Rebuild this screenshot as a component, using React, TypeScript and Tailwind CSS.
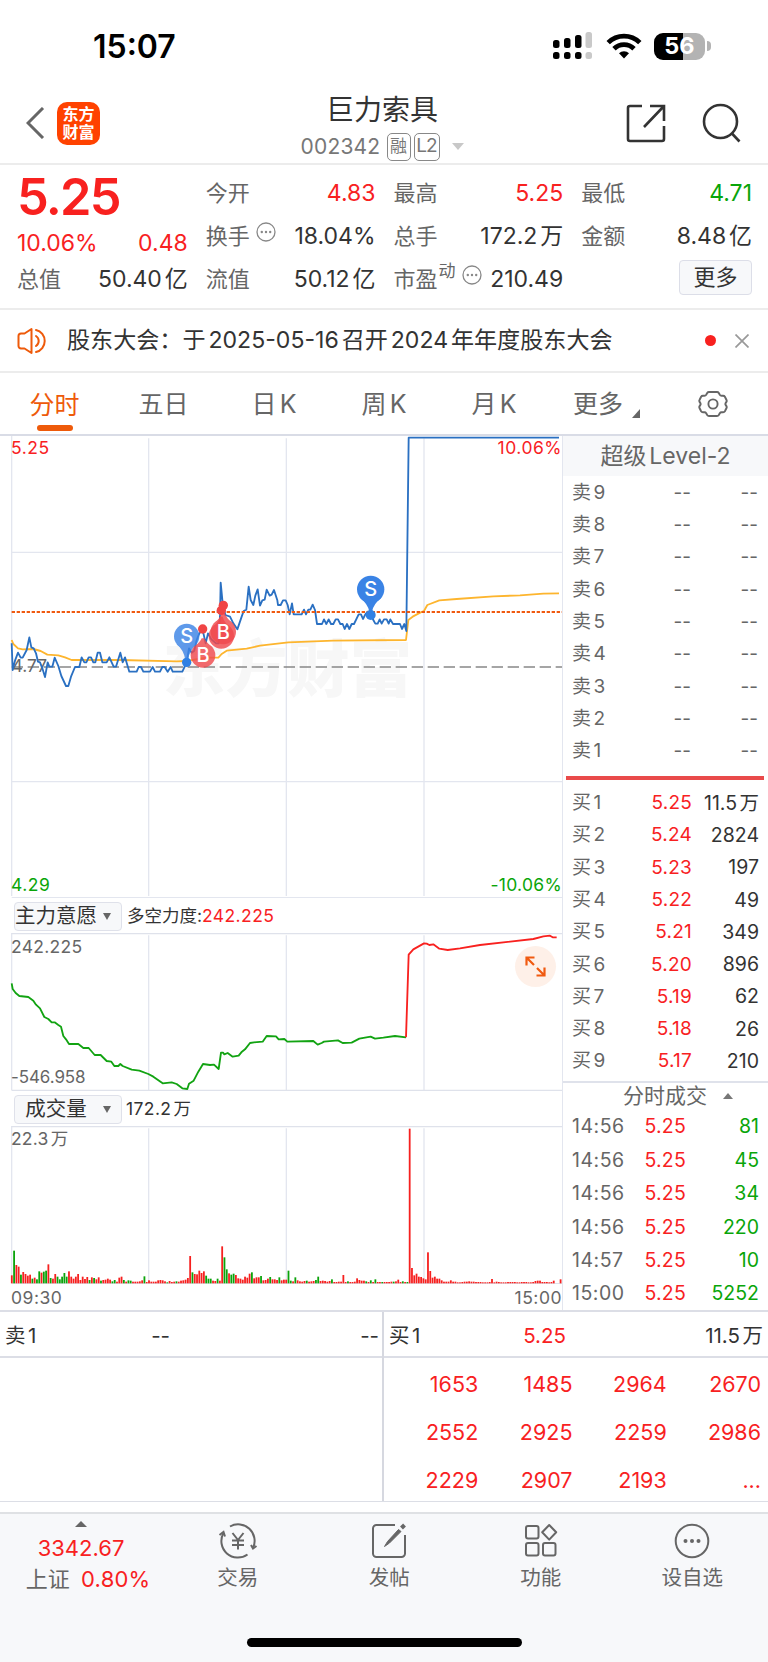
import { ReactNode } from "react";

const PRICE =
  "35,640 38,720 45,692 54,668 62,683 68,683 80,660 88,622 94,652 101,655 108,670 114,695 120,697 127,715 135,741 143,697 148,710 157,710 164,683 175,708 184,738 198,768 205,768 213,740 225,711 238,711 245,682 253,697 259,697 266,682 273,682 280,697 286,697 293,668 300,668 307,697 320,697 328,682 341,710 348,710 361,668 368,697 375,682 388,725 410,725 416,711 423,711 430,725 450,725 458,711 465,725 480,725 487,711 494,711 503,725 512,711 518,725 547,725 560,697 567,655 575,668 583,662 590,630 598,610 608,600 617,640 624,610 634,628 648,640 656,640 660,560 662,458 668,520 676,555 690,560 700,580 712,598 724,563 731,543 739,539 746,470 752,510 760,525 766,497 773,478 780,527 787,511 794,509 800,479 809,497 815,494 822,480 832,511 834,525 842,525 849,511 857,511 863,525 869,553 876,520 881,553 905,553 912,539 918,553 925,539 931,539 938,524 945,540 951,582 966,582 972,568 979,582 986,568 993,582 1000,582 1007,568 1014,568 1021,582 1028,582 1034,597 1041,582 1048,597 1055,582 1062,582 1076,553 1083,553 1089,567 1096,553 1103,545 1112,555 1120,570 1126,581 1133,581 1139,568 1145,581 1152,568 1160,568 1166,581 1171,568 1179,582 1200,582 1206,597 1213,582 1219,603 1226,23 1677,23";

const AVERAGE =
  "35,630 40,642 54,655 68,658 100,657 122,663 142,674 175,676 195,682 215,690 360,690 530,694 560,693 620,683 655,683 665,672 680,662 740,656 780,647 865,637 1000,632 1218,630 1225,570 1238,560 1262,547 1272,543 1282,525 1318,511 1370,507 1480,499 1560,496 1630,491 1677,490";

const FORCE_DOWN =
  "35,370 38,387 47,399 58,408 85,411 100,422 108,434 120,445 133,471 145,477 155,487 164,487 175,495 183,500 190,528 198,538 207,552 235,552 250,564 266,564 284,585 302,585 320,603 334,605 343,618 355,618 361,612 368,618 395,629 418,632 445,642 460,650 488,670 515,667 530,672 547,685 562,687 567,671 581,662 595,635 609,612 630,615 642,614 656,627 663,578 669,578 673,583 683,579 698,590 716,587 724,577 735,568 750,549 762,547 788,545 800,528 828,529 836,538 853,537 862,545 940,543 953,554 965,549 972,545 1014,541 1028,549 1055,548 1078,536 1112,530 1125,536 1150,533 1185,528 1218,532";

const FORCE_UP =
  "1218,532 1226,284 1240,268 1272,250 1280,251 1288,255 1300,253 1318,266 1343,270 1380,265 1440,255 1600,237 1630,229 1650,227 1658,232 1670,232";

// one entry per minute: direction + bar height
const VOLUME =
  "r24 g98 r55 r50 g26 r34 r28 r23 r26 g14 r17 g12 g36 r32 g35 g38 r57 g16 r14 r28 g20 g12 g20 g31 g20 r36 r20 r14 r20 r28 r10 r20 r13 r19 g10 r18 g16 r12 r18 g8 r10 r11 r14 r11 g6 g10 r5 r17 r20 g10 r5 g9 g8 r5 r5 r5 r6 r9 g21 r4 r9 r5 r5 r5 r9 r10 r9 r6 g3 r7 r4 r5 g6 r5 r8 r9 r11 r16 r82 g33 r28 r27 r38 r31 r36 g23 g14 g14 r8 r7 g14 r8 r111 g78 g42 r30 g26 g29 r25 r15 r14 r11 r20 r17 r29 g33 r15 r18 r18 g22 r9 r10 r14 g19 r12 r12 r10 g18 r9 r11 r11 g38 g8 r6 g18 r9 r6 r5 r7 g8 r5 r6 r7 g10 g20 r7 r8 r7 r5 r7 g12 r4 r4 r5 r5 r25 r4 g6 r4 r4 r5 r15 r10 r8 r8 g6 r4 g9 r4 g12 r4 r4 g4 r4 r4 r4 r5 g5 r6 r11 r4 g6 r4 g4 r464 r46 r24 r29 r20 r19 r15 r12 r93 r37 r17 r20 r14 r14 r9 r5 r5 r5 r9 r5 r5 r3 r3 r4 r5 r5 r6 r5 r5 r4 r4 r4 r3 r3 r3 r4 r13 r3 r5 r4 r3 r3 r3 r4 r4 r4 r4 r3 r3 r4 r4 r4 r3 r3 r4 r7 r8 r8 r4 r4 r4 r3 r4 r8 g0 g0 r12".split(" ");

const TRADES = [
  ["14:56", "5.25", "81"],
  ["14:56", "5.25", "45"],
  ["14:56", "5.25", "34"],
  ["14:56", "5.25", "220"],
  ["14:57", "5.25", "10"],
  ["15:00", "5.25", "5252"],
];

const BIDS = [
  ["买1", "5.25", "11.5万"],
  ["买2", "5.24", "2824"],
  ["买3", "5.23", "197"],
  ["买4", "5.22", "49"],
  ["买5", "5.21", "349"],
  ["买6", "5.20", "896"],
  ["买7", "5.19", "62"],
  ["买8", "5.18", "26"],
  ["买9", "5.17", "210"],
];

const QUEUE = ["1653", "1485", "2964", "2670", "2552", "2925", "2259", "2986", "2229", "2907", "2193", "..."];

const StatusBar = () => (
  <div className="flex h-[92px] items-center pl-[93px] pr-[57px]">
    <span className="mt-px text-[32px] font-semibold leading-none text-black">15:07</span>
    <svg className="ml-auto" width="40" height="28" viewBox="0 0 40 28">
      <g fill="#000">
        <rect x="0" y="8" width="6.5" height="8" rx="2.5" />
        <rect x="11" y="6" width="6.5" height="10" rx="2.5" />
        <rect x="22" y="3" width="6.5" height="13" rx="2.5" />
        <rect x="0" y="20" width="6.5" height="7" rx="2.5" />
        <rect x="11" y="20" width="6.5" height="7" rx="2.5" />
        <rect x="22" y="20" width="6.5" height="7" rx="2.5" />
      </g>
      <g fill="#c9c9c9">
        <rect x="32.5" y="0" width="6.5" height="16" rx="2.5" />
        <rect x="32.5" y="20" width="6.5" height="7" rx="2.5" />
      </g>
    </svg>
    <svg className="ml-[13px]" width="36" height="26" viewBox="0 0 36 26">
      <g fill="none" stroke="#000" strokeWidth="4.8">
        <path d="M2.2 9.6a22.5 22.5 0 0 1 31.6 0" />
        <path d="M8 15.8a14.2 14.2 0 0 1 20 0" />
      </g>
      <path d="M18 25.5l-5-5.2a7 7 0 0 1 10 0z" fill="#000" />
    </svg>
    <div className="ml-3 flex items-center">
      <div className="flex h-[27px] w-[51px] items-center justify-center rounded-[9px] bg-[linear-gradient(90deg,#000_56%,#b3b3b3_56%)] text-[23.500px] font-bold leading-none text-white">
        56
      </div>
      <div className="ml-[2px] h-[10px] w-[4px] rounded-r-full bg-[#b3b3b3]" />
    </div>
  </div>
);

const Header = () => (
  <header className="flex h-[73px] items-center border-b-2 border-[#ececec] pl-[26px] pr-[27px]">
    <svg className="mb-[9px]" width="19" height="32" viewBox="0 0 19 32" fill="none" stroke="#666" strokeWidth="3">
      <path d="M17 1L2 16l15 15" />
    </svg>
    <div className="mb-[9px] ml-3 flex size-[43px] flex-col items-center justify-center rounded-[10px] bg-[#ff4200] text-[16px] font-semibold leading-[18px] text-white">
      <span>东方</span>
      <span>财富</span>
    </div>
    <div className="flex flex-1 flex-col items-center pl-[38px]">
      <h1 className="-mt-px text-[28px] leading-[34px] text-[#333]">巨力索具</h1>
      <div className="mt-[5px] flex h-[29px] items-center text-[21px] text-[#777]">
        <span className="w-[79px] tracking-[0.2px]">002342</span>
        <span className="ml-[7px] flex h-7 w-6 items-center justify-center rounded-[5px] border border-[#888] text-[17px]">融</span>
        <span className="ml-[3px] flex h-7 w-[26px] items-center justify-center rounded-[5px] border border-[#888] text-[19px] tracking-tighter">L2</span>
        <span className="ml-3 border-x-[6px] border-t-[7px] border-x-transparent border-t-[#c8c8c8]" />
      </div>
    </div>
    <svg className="mb-[9px]" width="40" height="40" viewBox="0 0 40 40" fill="none" stroke="#333" strokeWidth="2.6">
      <path d="M16 3H4a2 2 0 0 0-2 2v31a2 2 0 0 0 2 2h32a2 2 0 0 0 2-2V23" />
      <path d="M24 3h14v15M38 3L18 24" />
    </svg>
    <svg className="mb-[9px] ml-9" width="39" height="40" viewBox="0 0 39 40" fill="none" stroke="#333" strokeWidth="2.6">
      <circle cx="18.500" cy="18.500" r="16.500" />
      <path d="M29.500 30l8 8.500" />
    </svg>
  </header>
);

const Dots = () => (
  <svg className="mb-2.5 ml-1.5 shrink-0" width="20" height="20" viewBox="0 0 20 20">
    <circle cx="10" cy="10" r="9" fill="none" stroke="#888" strokeWidth="1.300" />
    <g fill="#888">
      <circle cx="5.800" cy="10" r="1.200" />
      <circle cx="10" cy="10" r="1.200" />
      <circle cx="14.200" cy="10" r="1.200" />
    </g>
  </svg>
);

const Stat = ({ label, value, color = "text-[#333]" }: { label: ReactNode; value: string; color?: string }) => (
  <div className="flex h-[43px] items-center justify-between">
    <span className="flex items-center text-[22px] text-[#666]">{label}</span>
    <span className={"text-[23px] " + color}>{value}</span>
  </div>
);

const Stats = () => (
  <section className="flex h-[145px] gap-[18px] border-b-2 border-[#ececec] pl-[17px] pr-4 pt-[7px]">
    <div className="w-[171px]">
      <div className="h-[56px] text-[50.500px] font-semibold leading-[49px] tracking-[-1.800px] text-[#f8211f]">5.25</div>
      <div className="flex h-[30px] items-center justify-between text-[23px] text-[#f8211f]">
        <span>10.06%</span>
        <span>0.48</span>
      </div>
      <Stat label="总值" value="50.40亿" />
    </div>
    <div className="w-[170px]">
      <Stat label="今开" value="4.83" color="text-[#f8211f]" />
      <Stat label={<>换手<Dots /></>} value="18.04%" />
      <Stat label="流值" value="50.12亿" />
    </div>
    <div className="w-[170px]">
      <Stat label="最高" value="5.25" color="text-[#f8211f]" />
      <Stat label="总手" value="172.2万" />
      <Stat label={<>市盈<span className="mb-4 ml-px text-[17px]">动</span><Dots /></>} value="210.49" />
    </div>
    <div className="w-[171px]">
      <Stat label="最低" value="4.71" color="text-[#09a509]" />
      <Stat label="金额" value="8.48亿" />
      <div className="ml-auto mt-[2px] flex h-[35px] w-[73px] items-center justify-center rounded-[4px] border border-[#dcdee8] bg-[#f7f8fa] text-[22px] text-[#333]">
        更多
      </div>
    </div>
  </section>
);

const Notice = () => (
  <div className="flex h-[63px] items-center border-b-2 border-[#ececec] pl-[17px] pr-[19px]">
    <svg width="32" height="28" viewBox="0 0 32 28" fill="none" stroke="#ee5a0a" strokeWidth="2">
      <path d="M14.500 2v24l-7-4.500H4a2.500 2.500 0 0 1-2.500-2.500V9A2.500 2.500 0 0 1 4 6.500h3.500z" strokeLinejoin="round" />
      <path d="M19 9a6 6 0 0 1 0 10M19 3a11.300 11.300 0 0 1 0 22" strokeLinecap="round" />
    </svg>
    <span className="ml-[18px] whitespace-nowrap text-[23.100px] text-[#333]">股东大会：于2025-05-16召开2024年年度股东大会</span>
    <span className="ml-auto size-[11px] rounded-full bg-[#f8211f]" />
    <svg className="ml-[19px]" width="14" height="14" viewBox="0 0 14 14" stroke="#999" strokeWidth="1.700">
      <path d="M.5.5l13 13M13.500.5l-13 13" />
    </svg>
  </div>
);

const Tabs = () => (
  <nav className="flex h-[63px] items-center border-b-2 border-[#d9dce6] text-[25px] text-[#666]">
    <div className="flex h-full w-[109px] flex-col items-center pt-[13px] text-[#ee5a0a]">
      <span className="leading-[38px]">分时</span>
      <span className="mt-px h-[6px] w-9 rounded-full bg-[#ee5a0a]" />
    </div>
    <span className="mt-[2px] w-[109px] text-center">五日</span>
    <span className="mt-[2px] w-[112px] text-center">日K</span>
    <span className="mt-[2px] w-[108px] text-center">周K</span>
    <span className="mt-[2px] w-[112px] text-center">月K</span>
    <span className="ml-[23px] mt-[2px]">更多</span>
    <svg className="ml-[9px] mt-5" width="8" height="9" viewBox="0 0 8 9">
      <path d="M8 0v9H0z" fill="#666" />
    </svg>
    <svg className="ml-[58px]" width="30" height="28" viewBox="0 0 30 28" fill="none" stroke="#666" strokeWidth="1.900">
      <path d="M11 2h8q1.200 0 1.800 1l1 1.800q.6 1 1.700 1h1.600q1.200 0 1.800 1l1.600 3.200q.5 1-.1 1.900l-.8 1.200q-.5.900 0 1.800l.8 1.200q.6 1 .1 1.900l-1.600 3.200q-.6 1-1.800 1h-1.600q-1.100 0-1.700 1l-1 1.800q-.6 1-1.800 1h-8q-1.200 0-1.800-1l-1-1.800q-.6-1-1.700-1H4.900q-1.200 0-1.800-1L1.500 18q-.5-1 .1-1.900l.8-1.200q.5-.900 0-1.800l-.8-1.200q-.6-1-.1-1.900l1.600-3.200q.6-1 1.800-1h1.600q1.100 0 1.700-1l1-1.800q.6-1 1.800-1z" />
      <circle cx="15" cy="14" r="4.600" />
    </svg>
  </nav>
);

const Verticals = ({ y1, y2 }: { y1: number; y2: number }) => (
  <g stroke="#e3e6ef" strokeWidth="4">
    <path d={`M35 ${y1}V${y2}`} />
    <path d={`M446 ${y1 + 7}V${y2}`} />
    <path d={`M859 ${y1 + 7}V${y2}`} />
    <path d={`M1272 ${y1 + 7}V${y2}`} />
  </g>
);

const Pin = ({ x, y, r, tip, color, letter }: { x: number; y: number; r: number; tip: number; color: string; letter?: string }) => {
  const d = tip > y ? 1 : -1;
  return (
    <g>
      <g fill={color} opacity="0.82">
        <circle cx={x} cy={y} r={r} />
        <path d={`M${x - r * 0.8} ${y + d * r * 0.6}Q${x - 8} ${y + d * r * 1.08} ${x - 4} ${tip}H${x + 4}Q${x + 8} ${y + d * r * 1.08} ${x + r * 0.8} ${y + d * r * 0.6}Z`} />
      </g>
      {letter && (
        <text x={x} y={y + 21} textAnchor="middle" fontSize="60" fontWeight="500" fill="#fff">
          {letter}
        </text>
      )}
    </g>
  );
};

const PriceChart = () => (
  <div className="relative h-[462px]">
    <svg className="block" width="562" height="462" viewBox="0 18 1686 1386">
      <text x="488" y="786" fontSize="187" fontWeight="900" fill="#f7f7f7">东方财富</text>
      <Verticals y1={18} y2={1398} />
      <path d="M35 367H1686M35 1055H1686M35 1403H1686" stroke="#e3e6ef" strokeWidth="4" />
      <path d="M35 711H1686" stroke="#888" strokeWidth="4" strokeDasharray="34 14" />
      <text x="35" y="727" fontSize="52" fill="#666">4.77</text>
      <polyline points={AVERAGE} fill="none" stroke="#fdb52e" strokeWidth="5.500" strokeLinejoin="round" />
      <polyline points={PRICE} fill="none" stroke="#2a70c2" strokeWidth="5.500" strokeLinejoin="round" />
      <path d="M35 546H1686" stroke="#f05a10" strokeWidth="5.500" strokeDasharray="10 5" />
      <Pin x={560} y={619} r={38} tip={690} color="#3d84e6" letter="S" />
      <circle cx="560" cy="697" r="14" fill="#2f80e4" />
      <Pin x={609} y={676} r={37} tip={625} color="#f04a4e" letter="B" />
      <circle cx="608" cy="597" r="14" fill="#f04444" />
      <Pin x={664} y={618} r={38} tip={560} color="#f04a4e" />
      <Pin x={670} y={605} r={38} tip={548} color="#f04a4e" letter="B" />
      <circle cx="664" cy="541" r="14" fill="#f04444" />
      <circle cx="670" cy="526" r="14" fill="#f04444" />
      <Pin x={1112} y={478} r={41} tip={545} color="#1069e0" letter="S" />
      <circle cx="1112" cy="555" r="15" fill="#2f80e4" />
    </svg>
    <span className="absolute left-[11px] top-0 text-[17.500px] leading-6 tracking-[0.500px] text-[#f8211f]">5.25</span>
    <span className="absolute right-0 top-0 text-[17.500px] leading-6 tracking-[0.500px] text-[#f8211f]">10.06%</span>
    <span className="absolute bottom-[1px] left-[11px] text-[17.500px] leading-6 tracking-[0.500px] text-[#09a509]">4.29</span>
    <span className="absolute bottom-[1px] right-0 text-[17.500px] leading-6 tracking-[0.300px] text-[#09a509]">-10.06%</span>
  </div>
);

const Select = ({ children }: { children: ReactNode }) => (
  <div className="ml-[14px] flex h-[29px] w-[108px] items-center rounded-[4px] border border-[#dfe1ea] bg-[#f7f8fa] text-[20.500px] text-[#333]">
    <span className="w-[82px] whitespace-nowrap text-center">{children}</span>
    <span className="ml-[6px] border-x-[4.500px] border-t-[7px] border-x-transparent border-t-[#666]" />
  </div>
);

const ForceChart = () => (
  <div className="relative h-[158px]">
    <svg className="block" width="562" height="158" viewBox="0 219 1686 474">
      <Verticals y1={219} y2={691} />
      <path d="M35 221H1686M35 691H1686" stroke="#dfe2eb" strokeWidth="4" />
      <polyline points={FORCE_DOWN} fill="none" stroke="#12a312" strokeWidth="5.500" strokeLinejoin="round" />
      <polyline points={FORCE_UP} fill="none" stroke="#f8211f" strokeWidth="5.500" strokeLinejoin="round" />
    </svg>
    <span className="absolute left-[11px] top-[2px] text-[17.500px] leading-6 tracking-[0.300px] text-[#666]">242.225</span>
    <span className="absolute bottom-[2px] left-[11px] text-[17px] leading-6 tracking-[-0.100px] text-[#666]">-546.958</span>
    <div className="absolute right-[6px] top-[13px] flex size-[41px] items-center justify-center rounded-full bg-[#fef0e8]">
      <svg width="21" height="21" viewBox="0 0 21 21" fill="none" stroke="#f05a10" strokeWidth="2.200">
        <path d="M1.500 9.500v-8h8M1.500 1.500l7.500 7.500M19.500 11.500v8h-8M19.500 19.500l-7.500-7.500" />
      </svg>
    </div>
  </div>
);

const VolumeChart = () => (
  <div className="relative h-[158px]">
    <svg className="block" width="562" height="158" viewBox="0 136 1686 474">
      <Verticals y1={136} y2={608} />
      <path d="M35 138H1686M35 609H1686" stroke="#dfe2eb" strokeWidth="4" />
      {VOLUME.map((bar, i) => {
        const h = Number(bar.slice(1));
        return <rect key={i} x={32.7 + i * 6.86} y={608 - h} width="5.400" height={h} fill={bar[0] === "r" ? "#f6201f" : "#0ba30b"} />;
      })}
    </svg>
    <span className="absolute left-[11px] top-[1px] text-[17.500px] leading-6 tracking-[0.200px] text-[#666]">22.3万</span>
  </div>
);

const Charts = () => (
  <div className="w-[562px]">
    <PriceChart />
    <div className="flex h-[35px] items-center pt-px text-[17.500px] text-[#333]">
      <Select>主力意愿</Select>
      <span className="ml-[5px]">
        多空力度:<span className="tracking-[0.400px] text-[#f8211f]">242.225</span>
      </span>
    </div>
    <ForceChart />
    <div className="flex h-[35px] items-center pt-px text-[17.500px] text-[#333]">
      <Select>成交量</Select>
      <span className="ml-[4px] tracking-[0.400px]">172.2万</span>
    </div>
    <VolumeChart />
    <div className="flex justify-between pl-[11px] text-[17.500px] leading-[28px] tracking-[0.500px] text-[#666]">
      <span>09:30</span>
      <span>15:00</span>
    </div>
  </div>
);

const OrderBook = () => (
  <aside className="w-[206px] border-l border-[#e3e6ef] text-[19px]">
    <div className="flex h-[40px] items-center justify-center bg-[#f7f8fa] text-[23px] text-[#666]">超级Level-2</div>
    <div className="pl-[9px] pr-[10px] pt-px">
      {[9, 8, 7, 6, 5, 4, 3, 2, 1].map((n) => (
        <div key={n} className="flex h-[32.300px] items-center text-[#666]">
          <span className="w-[52px]">卖{n}</span>
          <span className="w-[67px] text-right">--</span>
          <span className="flex-1 text-right">--</span>
        </div>
      ))}
    </div>
    <div className="ml-[3px] mr-1 mt-[8.500px] h-1 bg-[#e94a4a]" />
    <div className="mt-[7px] pl-[9px] pr-[9px]">
      {BIDS.map(([label, price, volume]) => (
        <div key={label} className="flex h-[32.300px] items-center">
          <span className="w-[52px] text-[#666]">{label}</span>
          <span className="w-[68px] text-right tracking-[0.200px] text-[#f8211f]">{price}</span>
          <span className="flex-1 whitespace-nowrap text-right text-[19.500px] text-[#333]">{volume}</span>
        </div>
      ))}
    </div>
    <div className="mt-[3px] flex h-[28px] items-center border-t-2 border-[#dfe2eb] pl-[60px] text-[21px] text-[#666]">
      分时成交
      <span className="ml-4 border-x-[5px] border-b-[6px] border-x-transparent border-b-[#777]" />
    </div>
    <div className="pl-[9px] pr-[9px] pt-[1.500px]">
      {TRADES.map(([time, price, volume], i) => (
        <div key={i} className="flex h-[33.400px] items-center text-[19.500px]">
          <span className="w-[60px] tracking-[0.500px] text-[#666]">{time}</span>
          <span className="w-[54px] text-right tracking-[0.200px] text-[#f8211f]">{price}</span>
          <span className="flex-1 text-right text-[#09a509]">{volume}</span>
        </div>
      ))}
    </div>
  </aside>
);

const Queue = () => (
  <section className="flex h-[192px] border-b border-t-2 border-[#dcdee6] text-[20.500px] text-[#333]">
    <div className="w-[384px] border-r-2 border-[#d6d8e0]">
      <div className="flex h-[46px] items-center border-b-2 border-[#dcdee6] pl-[5px] pr-[3px] pt-[5px]">
        <span className="w-[120px]">卖1</span>
        <span className="w-[45px] text-right">--</span>
        <span className="flex-1 text-right">--</span>
      </div>
    </div>
    <div className="flex-1">
      <div className="flex h-[46px] items-center border-b-2 border-[#dcdee6] pl-[5px] pr-[5px] pt-[5px]">
        <span className="w-[120px]">买1</span>
        <span className="w-[57px] text-right text-[#f8211f]">5.25</span>
        <span className="flex-1 text-right">11.5万</span>
      </div>
      <div className="grid grid-cols-4 pr-[7px] pt-[2px] text-right text-[21.500px] text-[#f8211f]">
        {QUEUE.map((n) => (
          <span key={n} className="leading-[48px]">{n}</span>
        ))}
      </div>
    </div>
  </section>
);

const NavItem = ({ label, children }: { label: string; children: ReactNode }) => (
  <div className="flex w-[151.500px] flex-col items-center pt-[8px] text-[20.500px] text-[#666]">
    <svg width="40" height="38" viewBox="0 0 40 38" fill="none" stroke="#666" strokeWidth="2">
      {children}
    </svg>
    <span className="mt-[2px] leading-8">{label}</span>
  </div>
);

const BottomNav = () => (
  <footer className="mt-[10px] h-[150px] border-t-2 border-[#dfe1e4] bg-[#f7f8fa]">
    <div className="flex h-[124px]">
      <div className="flex w-[162px] flex-col items-center pt-[7px] text-[22px] text-[#f8211f]">
        <span className="border-x-[6px] border-b-[6px] border-x-transparent border-b-[#666]" />
        <span className="mt-[6px] leading-[30px]">3342.67</span>
        <span className="flex whitespace-nowrap pl-[14px] leading-[32px] tracking-[0.200px]">
          <span className="mr-[11px] text-[#666]">上证</span>0.80%
        </span>
      </div>
      <NavItem label="交易">
        <path d="M12 4.500A16.500 16.500 0 0 1 35 26M29.500 32.500A16.500 16.500 0 0 1 5.500 11" />
        <path d="M1.500 13l4-3 1.500 4.500M38.500 24l-3.500 2.500-2-3.500" />
        <path d="M14.500 11l5.500 7 5.500-7M20 18v9.500M14 18.500h12M14 23h12" />
      </NavItem>
      <NavItem label="发帖">
        <path d="M26 3H7.500A3.500 3.500 0 0 0 4 6.500v25A3.500 3.500 0 0 0 7.500 35h25a3.500 3.500 0 0 0 3.500-3.500V13" />
        <path d="M15.500 24.500l3-5L29.500 7.500l2.500 2L20.500 21z" fill="#666" strokeWidth="1" />
        <path d="M32.500 6l3-3" strokeWidth="4" />
      </NavItem>
      <NavItem label="功能">
        <rect x="5" y="4" width="12.500" height="12.500" rx="2" />
        <rect x="5" y="21" width="12.500" height="12.500" rx="2" />
        <rect x="22" y="21" width="12.500" height="12.500" rx="2" />
        <path d="M28.200 3l7 7.300-7 7.300-7-7.300z" strokeLinejoin="round" />
      </NavItem>
      <NavItem label="设自选">
        <circle cx="20" cy="19" r="16.300" />
        <g fill="#666" stroke="none">
          <circle cx="13.500" cy="19" r="2" />
          <circle cx="20" cy="19" r="2" />
          <circle cx="26.500" cy="19" r="2" />
        </g>
      </NavItem>
    </div>
    <div className="mx-auto h-[9px] w-[275px] rounded-full bg-black" />
  </footer>
);

const App = () => {
  return (
    <main className="h-[1662px] w-[768px] overflow-hidden bg-white font-[Inter,'Noto_Sans_CJK_SC',sans-serif] [text-autospace:normal]">
      <StatusBar />
      <Header />
      <Stats />
      <Notice />
      <Tabs />
      <div className="flex h-[874px] overflow-hidden">
        <Charts />
        <OrderBook />
      </div>
      <Queue />
      <BottomNav />
    </main>
  );
};

export default App;
